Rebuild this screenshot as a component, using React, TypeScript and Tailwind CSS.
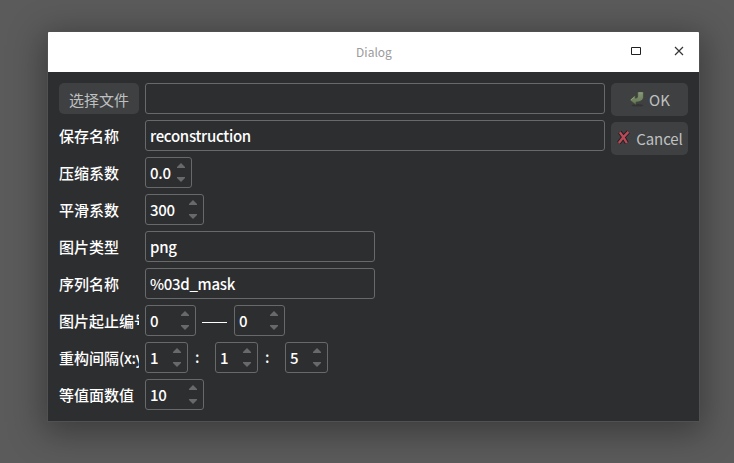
import type { ReactNode } from 'react';

function Label({ children }: { children: ReactNode }) {
  return (
    <div className="h-[31px] w-20 shrink-0 overflow-hidden whitespace-nowrap leading-[31px]">{children}</div>
  );
}

function Row({ label, children }: { label: ReactNode; children: ReactNode }) {
  return (
    <div className="flex h-[31px] items-center gap-1.5">
      <Label>{label}</Label>
      {children}
    </div>
  );
}

function Field({ value, width }: { value: string; width: string }) {
  return (
    <div className={`h-[31px] rounded-[3px] border border-[#68696b] pl-1 leading-[30px] tracking-[-0.3px] ${width}`}>{value}</div>
  );
}

function Spin({ value, width }: { value: string; width: string }) {
  return (
    <div className={`flex h-[31px] shrink-0 items-center justify-between rounded-[3px] border border-[#68696b] pl-1 pr-1.5 leading-[29px] tracking-[-0.3px] ${width}`}>
      <span>{value}</span>
      <svg width="8" height="19" viewBox="0 0 8 19" fill="#68696b">
        <path d="M4 0L8 4V5H0V4Z" />
        <path d="M4 19L8 15V14H0V15Z" />
      </svg>
    </div>
  );
}

function OkIcon() {
  return (
    <svg className="mb-px" width="16" height="16" viewBox="0 0 16 16">
      <defs>
        <linearGradient id="leaf" x1="0" y1="0" x2="0" y2="1">
          <stop offset="0" stopColor="#87977a" />
          <stop offset="1" stopColor="#627451" />
        </linearGradient>
      </defs>
      <ellipse cx="8.5" cy="14.3" rx="6" ry="1.2" fill="#323434" />
      <path d="M8.7 1H14.4V6.8Q13.5 10.8 7 11.2V14L.7 9L6.2 4.5V7.2Q8.8 7.2 8.7 5Z" fill="url(#leaf)" stroke="#3c4934" strokeWidth=".7" />
      <path d="M9.5 1.8H13.6M2 8.8L5.6 5.8" stroke="#9cab8c" strokeWidth=".7" />
    </svg>
  );
}

function CancelIcon() {
  return (
    <svg className="mb-px" width="16" height="16" viewBox="0 0 16 16">
      <path d="M3.8 2.2Q7 6 10.8 13M12.4 1.8Q7.5 6.5 2.8 13" fill="none" stroke="#251c20" strokeWidth="4.2" />
      <path d="M3.8 2.3Q7 6 10.8 13M12.4 1.8Q7.5 6.5 2.8 13" fill="none" stroke="#b94a57" strokeWidth="2.4" />
    </svg>
  );
}

export default function App() {
  return (
    <main className="h-[463px] w-[734px] overflow-hidden bg-[#5b5b5b] pl-12 pt-8 font-['Noto_Sans_CJK_SC',sans-serif] text-[15px] text-white">
      <section className="flex h-[389px] w-[651px] flex-col shadow-[0_0_0_1px_#505151,0_7px_32px_5px_rgba(0,0,0,0.35)]">
        <header className="grid h-10 shrink-0 grid-cols-[1fr_auto_1fr] items-center rounded-t-[1px] bg-white">
          <span />
          <span className="pl-px text-[12px] text-[#9b9b9b]">Dialog</span>
          <div className="flex items-center justify-end gap-[33px] pr-[15px]">
            <svg className="mb-0.5" width="10" height="8" viewBox="0 0 10 8">
              <path d="M.5 .5H9.5V7.5H.5Z" fill="none" stroke="#202020" />
            </svg>
            <svg className="mb-0.5" width="10" height="10" viewBox="0 0 10 10">
              <path d="M1 1L9 9M9 1L1 9" stroke="#353535" strokeWidth="1.2" />
            </svg>
          </div>
        </header>
        <div className="flex flex-1 gap-1.5 bg-[#2d2e30] pl-[11px] pt-[11px] font-medium">
          <div className="flex w-[546px] flex-col gap-1.5">
            <div className="flex h-[31px] gap-1.5">
              <button className="w-20 shrink-0 rounded-[5px] bg-[#3f4042] pt-0.5 font-normal leading-[29px] text-[#bfc0c1]">选择文件</button>
              <Field value="" width="w-[460px]" />
            </div>
            <Row label="保存名称"><Field value="reconstruction" width="w-[460px]" /></Row>
            <Row label="压缩系数"><Spin value="0.0" width="w-[47px]" /></Row>
            <Row label="平滑系数"><Spin value="300" width="w-[59px]" /></Row>
            <Row label="图片类型"><Field value="png" width="w-[230px]" /></Row>
            <Row label="序列名称"><Field value="%03d_mask" width="w-[230px]" /></Row>
            <Row label="图片起止编号">
              <Spin value="0" width="w-[51px]" />
              <span className="mr-px mt-[3px] h-px w-[25px] bg-white" />
              <Spin value="0" width="w-[51px]" />
            </Row>
            <Row label={<>重构间隔<span className="tracking-[-0.4px]">(x:y)</span></>}>
              <Spin value="1" width="w-[43px]" />
              <span className="w-[15px] pl-px">:</span>
              <Spin value="1" width="w-[43px]" />
              <span className="w-[15px] pl-px">:</span>
              <Spin value="5" width="w-[43px]" />
            </Row>
            <Row label="等值面数值"><Spin value="10" width="w-[59px]" /></Row>
          </div>
          <div className="flex w-[77px] flex-col gap-1.5 font-normal text-[#bfc0c1]">
            <button className="flex h-[33px] items-center justify-center gap-1 rounded-[5px] bg-[#3f4042]"><OkIcon /><span className="pt-0.5">OK</span></button>
            <button className="flex h-[33px] items-center justify-center gap-1 rounded-[5px] bg-[#3f4042]"><CancelIcon /><span className="pt-0.5 tracking-[-0.1px]">Cancel</span></button>
          </div>
        </div>
      </section>
    </main>
  );
}
